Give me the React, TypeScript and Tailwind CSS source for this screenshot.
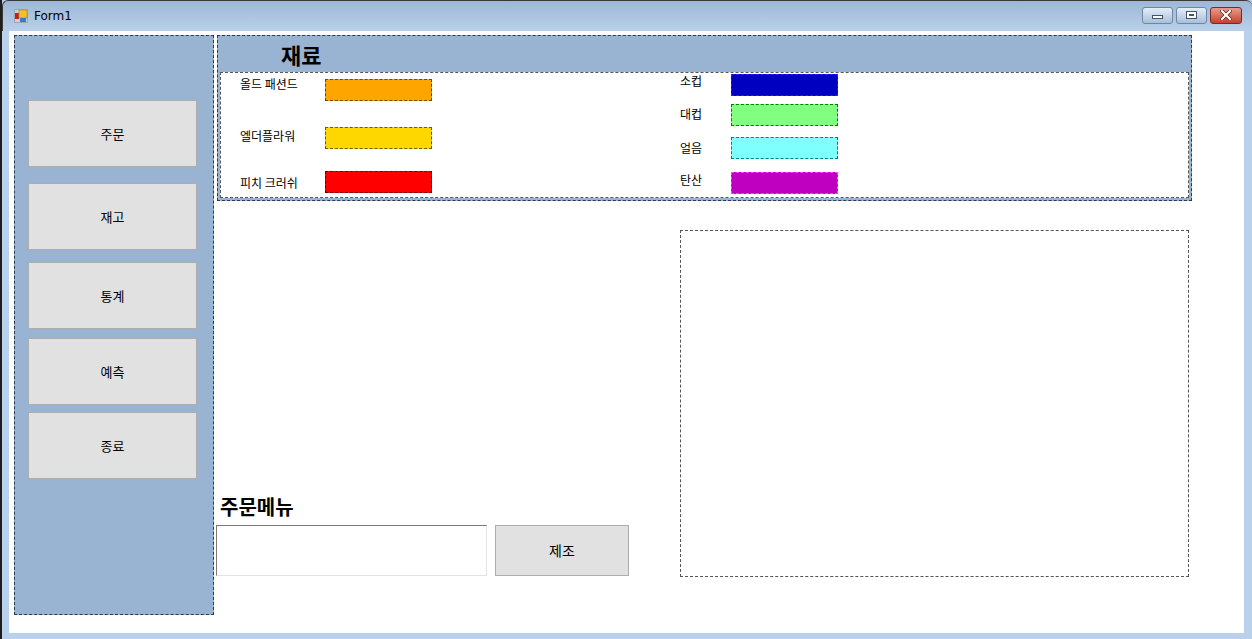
import React from 'react';

const ko = { fontFamily: '"Noto Sans CJK KR", "Noto Sans", sans-serif' };

function SideButton({ label, mt }: { label: string; mt: string }) {
  return (
    <button
      className={`${mt} w-[169px] h-[67px] bg-[#e1e1e1] border border-[#adadad] text-[13px] text-black flex items-center justify-center`}
      style={ko}
    >
      {label}
    </button>
  );
}

function Swatch({ label, color, labelW, mt, labelMt }: { label: string; color: string; labelW: string; mt: string; labelMt: string }) {
  return (
    <div className={`flex items-start ${mt}`}>
      <span className={`${labelW} ${labelMt} text-[12px] leading-[14px] text-black whitespace-pre`} style={ko}>
        {label}
      </span>
      <div className={`w-[107px] h-[22px] border border-dashed ${color}`} />
    </div>
  );
}

function TitleBar() {
  return (
    <div className="h-[31px] flex items-center bg-gradient-to-b from-[#9db7d6] to-[#b9d0ea] rounded-t-[6px] border-t border-l border-[#3a3a3a] pl-[11px]">
      <svg width="15" height="14" viewBox="0 0 15 14">
        <rect x="0.5" y="0.5" width="13" height="13" fill="#c9d2dc" stroke="#9aa7b5" />
        <rect x="1" y="4" width="4" height="6" fill="#c0201a" />
        <rect x="5" y="1" width="8" height="8" fill="#f5c030" stroke="#c08a10" strokeWidth="0.8" />
        <rect x="6" y="9" width="6" height="4" fill="#3a78d8" />
      </svg>
      <span className="ml-[5px] text-[12px] text-black" style={{ fontFamily: '"DejaVu Sans", "Liberation Sans", sans-serif' }}>
        Form1
      </span>
      <div className="ml-auto mr-[10px] flex items-center gap-[3px] mt-[-2px]">
        <div className="w-[31px] h-[17px] rounded-[3px] border border-[#6f86a5] bg-gradient-to-b from-[#e4edf7] to-[#a8bfdc] flex items-center justify-center">
          <div className="w-[11px] h-[4px] bg-white border border-[#44546a] mt-[4px]" />
        </div>
        <div className="w-[31px] h-[17px] rounded-[3px] border border-[#6f86a5] bg-gradient-to-b from-[#e4edf7] to-[#a8bfdc] flex items-center justify-center">
          <div className="w-[11px] h-[8px] bg-white border border-[#44546a] flex items-center justify-center">
            <div className="w-[5px] h-[2px] bg-[#44546a]" />
          </div>
        </div>
        <div className="w-[32px] h-[17px] rounded-[3px] border border-[#7a2a22] bg-gradient-to-b from-[#e89a8c] to-[#c2412c] flex items-center justify-center">
          <svg width="12" height="10" viewBox="0 0 12 10">
            <path d="M2 1 L10 9 M10 1 L2 9" stroke="#5a1a12" strokeWidth="3.6" strokeLinecap="square" />
            <path d="M2 1 L10 9 M10 1 L2 9" stroke="#ffffff" strokeWidth="2.2" strokeLinecap="square" />
          </svg>
        </div>
      </div>
    </div>
  );
}

export default function App() {
  return (
    <div className="w-[1252px] h-[639px] bg-[#b9d1ea] flex flex-col overflow-hidden border-l-2 border-[#1e1e1e]">
      <TitleBar />
      <div className="flex-1 flex">
        <div className="w-[7px]" />
        <div className="w-[1235px] h-[602px] bg-white flex pt-[4px] pl-[5px] gap-[3px]">
          {/* left menu panel */}
          <div className="w-[200px] h-[580px] bg-[#98b4d2] border border-dashed border-[#2b3a4e] flex flex-col items-start pl-[13px]">
            <SideButton label="주문" mt="mt-[64px]" />
            <SideButton label="재고" mt="mt-[16px]" />
            <SideButton label="통계" mt="mt-[12px]" />
            <SideButton label="예측" mt="mt-[9px]" />
            <SideButton label="종료" mt="mt-[7px]" />
          </div>

          <div className="flex flex-col">
            {/* 재료 panel */}
            <div className="w-[975px] h-[166px] bg-[#98b4d2] border border-dashed border-[#2b3a4e] flex flex-col px-[2px] pb-[2px]">
              <div className="h-[36px] flex items-center pl-[61px]">
                <span className="text-[22px] font-bold text-black leading-none" style={ko}>
                  재료
                </span>
              </div>
              <div className="flex-1 bg-white border border-dashed border-[#555555] flex">
                <div className="w-[459px] pl-[19px] flex flex-col">
                  <Swatch label="올드 패션드" color="bg-[#ffa500] border-[#6b4a00]" labelW="w-[85px]" mt="mt-[6px]" labelMt="-mt-[2px]" />
                  <Swatch label="엘더플라워" color="bg-[#ffd700] border-[#6b5a00]" labelW="w-[85px]" mt="mt-[26px]" labelMt="mt-[2px]" />
                  <Swatch label="피치 크러쉬" color="bg-[#ff0000] border-[#6b0000]" labelW="w-[85px]" mt="mt-[22px]" labelMt="mt-[5px]" />
                </div>
                <div className="flex flex-col">
                  <Swatch label="소컵" color="bg-[#0000c0] border-[#2020ff]" labelW="w-[51px]" mt="mt-[1px]" labelMt="mt-[0px]" />
                  <Swatch label="대컵" color="bg-[#80ff80] border-[#008000]" labelW="w-[51px]" mt="mt-[8px]" labelMt="mt-[3px]" />
                  <Swatch label="얼음" color="bg-[#80ffff] border-[#008080]" labelW="w-[51px]" mt="mt-[11px]" labelMt="mt-[4px]" />
                  <Swatch label="탄산" color="bg-[#c000c0] border-[#ff40ff]" labelW="w-[51px]" mt="mt-[13px]" labelMt="mt-[1px]" />
                </div>
              </div>
            </div>

            <div className="flex">
              {/* 주문메뉴 */}
              <div className="w-[463px] flex flex-col">
                <span className="mt-[294px] ml-[3px] text-[20px] font-bold leading-[24px] text-black" style={ko}>
                  주문메뉴
                </span>
                <div className="flex mt-[6px] -ml-[1px]">
                  <div className="w-[271px] h-[51px] bg-white border border-t-[#7a7a7a] border-l-[#7a7a7a] border-r-[#e3e3e3] border-b-[#e3e3e3]" />
                  <button
                    className="ml-[8px] w-[134px] h-[51px] bg-[#e1e1e1] border border-[#adadad] text-[14px] text-black flex items-center justify-center"
                    style={ko}
                  >
                    제조
                  </button>
                </div>
              </div>
              {/* output box */}
              <div className="mt-[29px] w-[509px] h-[347px] border border-dashed border-[#555555]" />
            </div>
          </div>
        </div>
        <div className="flex-1" />
      </div>
      <div className="h-[6px]" />
    </div>
  );
}
